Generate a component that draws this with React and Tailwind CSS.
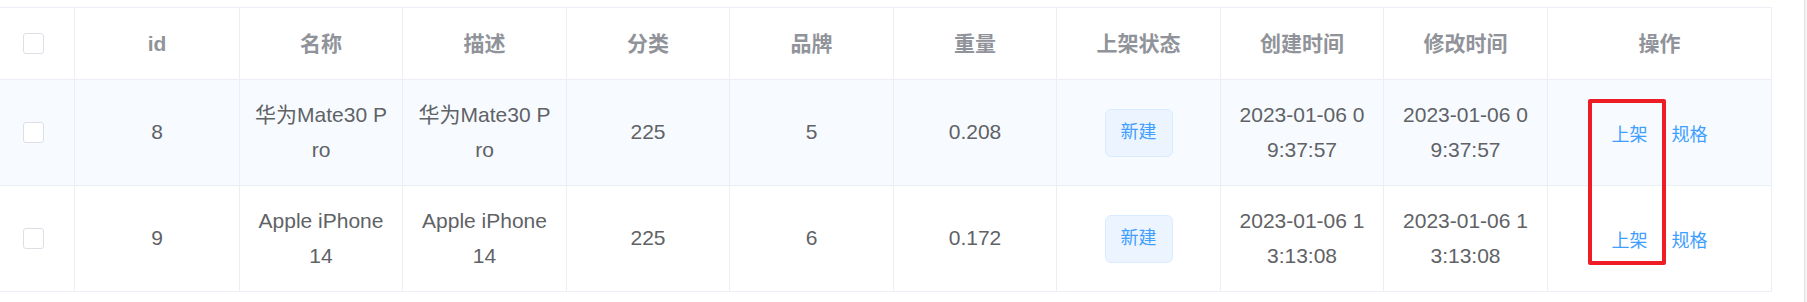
import React from 'react'

const columns = [
  { key: 'sel', label: '', width: 75 },
  { key: 'id', label: 'id', width: 165 },
  { key: 'name', label: '名称', width: 163 },
  { key: 'desc', label: '描述', width: 164 },
  { key: 'category', label: '分类', width: 163 },
  { key: 'brand', label: '品牌', width: 164 },
  { key: 'weight', label: '重量', width: 163 },
  { key: 'status', label: '上架状态', width: 164 },
  { key: 'created', label: '创建时间', width: 163 },
  { key: 'updated', label: '修改时间', width: 164 },
  { key: 'ops', label: '操作', width: 224 },
]

const rows = [
  {
    id: 8,
    name: '华为Mate30 Pro',
    desc: '华为Mate30 Pro',
    category: 225,
    brand: 5,
    weight: '0.208',
    created: '2023-01-06 09:37:57',
    updated: '2023-01-06 09:37:57',
    hover: true,
  },
  {
    id: 9,
    name: 'Apple iPhone 14',
    desc: 'Apple iPhone 14',
    category: 225,
    brand: 6,
    weight: '0.172',
    created: '2023-01-06 13:13:08',
    updated: '2023-01-06 13:13:08',
    hover: false,
  },
]

const Checkbox = () => (
  <span className="block w-[21px] h-[21px] rounded-[3px] border border-[#dcdfe6] bg-white" />
)

const Cell = ({ children }) => (
  <div className="px-[15px] break-all text-center">{children}</div>
)

const App = () => {
  return (
    <div
      className="flex w-[1807px] h-[302px] bg-white pt-[7px]"
      style={{ fontFamily: '"Liberation Sans", Arial, "Noto Sans CJK SC", sans-serif' }}
    >
      <div className="relative w-[1772px]">
        <table className="table-fixed border-separate border-spacing-0 w-[1772px] text-[21px] text-[#606266]">
          <colgroup>
            {columns.map((c) => (
              <col key={c.key} style={{ width: c.width }} />
            ))}
          </colgroup>
          <thead>
            <tr>
              {columns.map((c) => (
                <th
                  key={c.key}
                  className="border-t border-r border-b border-[#ebeef5] py-[18px] leading-[35px] font-bold text-[#909399] align-middle"
                >
                  {c.key === 'sel' ? (
                    <div className="pl-[23px] pr-[15px]">
                      <Checkbox />
                    </div>
                  ) : (
                    <Cell>{c.label}</Cell>
                  )}
                </th>
              ))}
            </tr>
          </thead>
          <tbody>
            {rows.map((r) => (
              <tr key={r.id} className={r.hover ? 'bg-[#f7fbff]' : 'bg-white'}>
                <td className="border-r border-b border-[#ebeef5] py-[18px] leading-[34.5px] align-middle">
                  <div className="pl-[23px] pr-[15px]">
                    <Checkbox />
                  </div>
                </td>
                <td className="border-r border-b border-[#ebeef5] py-[18px] leading-[34.5px] align-middle">
                  <Cell>{r.id}</Cell>
                </td>
                <td className="border-r border-b border-[#ebeef5] py-[18px] leading-[34.5px] align-middle">
                  <Cell>{r.name}</Cell>
                </td>
                <td className="border-r border-b border-[#ebeef5] py-[18px] leading-[34.5px] align-middle">
                  <Cell>{r.desc}</Cell>
                </td>
                <td className="border-r border-b border-[#ebeef5] py-[18px] leading-[34.5px] align-middle">
                  <Cell>{r.category}</Cell>
                </td>
                <td className="border-r border-b border-[#ebeef5] py-[18px] leading-[34.5px] align-middle">
                  <Cell>{r.brand}</Cell>
                </td>
                <td className="border-r border-b border-[#ebeef5] py-[18px] leading-[34.5px] align-middle">
                  <Cell>{r.weight}</Cell>
                </td>
                <td className="border-r border-b border-[#ebeef5] py-[18px] leading-[34.5px] align-middle">
                  <div className="flex justify-center">
                    <span className="inline-flex items-center h-[48px] px-[15px] rounded-[6px] border border-[#d9ecff] bg-[#ecf5ff] text-[18px] text-[#409eff]">
                      新建
                    </span>
                  </div>
                </td>
                <td className="border-r border-b border-[#ebeef5] py-[18px] leading-[34.5px] align-middle">
                  <Cell>{r.created}</Cell>
                </td>
                <td className="border-r border-b border-[#ebeef5] py-[18px] leading-[34.5px] align-middle">
                  <Cell>{r.updated}</Cell>
                </td>
                <td className="border-r border-b border-[#ebeef5] py-[18px] leading-[34.5px] align-middle">
                  <div className="flex justify-center gap-[24px] pt-[6px] text-[18px] text-[#409eff]">
                    <span>上架</span>
                    <span>规格</span>
                  </div>
                </td>
              </tr>
            ))}
          </tbody>
        </table>
        {/* 标注框 */}
        <div className="absolute left-[1588px] top-[92px] w-[78px] h-[166px] border-[4px] border-[#ee1d25] rounded-[2px]" />
      </div>
      <div className="flex-1" />
      <div className="w-[3px] -mt-[7px] border-l border-[#e2e2e2] bg-[#f3f3f3]" />
    </div>
  )
}

export default App
